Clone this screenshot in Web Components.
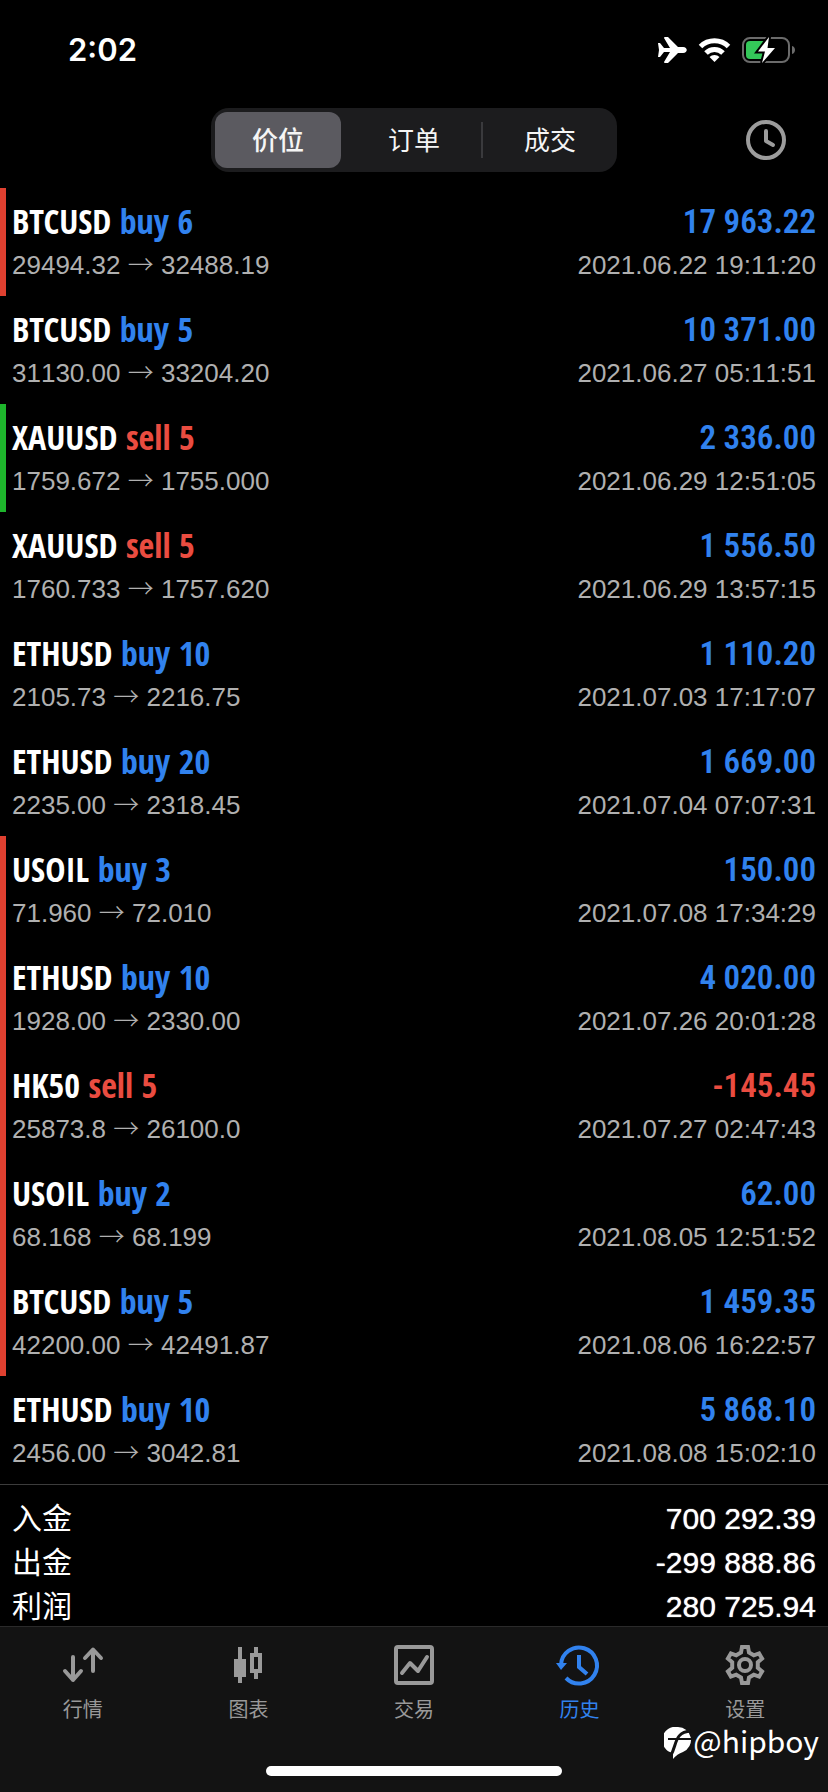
<!DOCTYPE html>
<html lang="zh-CN">
<head>
<meta charset="utf-8">
<meta name="viewport" content="width=device-width, initial-scale=1">
<title>历史</title>
<style>
  html { background: #000; }
  body {
    margin: 0;
    color: #fff;
    font-family: "Liberation Sans", "Noto Sans CJK SC", sans-serif;
    --blue: #3182ee;
    --red: #ea4c40;
    --grey: #b0b0b0;
    --icon: #999;
  }
</style>
</head>
<body>
<history-app></history-app>

<script>
const define = (name, html, setup) => {
  const template = document.createElement('template');
  template.innerHTML = html;
  customElements.define(name, class extends HTMLElement {
    constructor() {
      super();
      this.attachShadow({ mode: 'open' }).append(template.content.cloneNode(true));
    }
    connectedCallback() {
      if (setup) setup(this, this.shadowRoot);
    }
  });
};

define('status-bar', `
  <style>
    :host { display: flex; justify-content: space-between; align-items: center; height: 100px; padding: 0 32px 0 68px; }
    time { font: 600 31px/40px Inter, sans-serif; }
    .icons { display: flex; align-items: center; gap: 12px; }
    svg { display: block; overflow: visible; }
  </style>
  <time>2:02</time>
  <div class="icons">
    <svg width="29" height="26" viewBox="0 0 29 26" fill="#fff" role="img" aria-label="飞行模式">
      <path d="M0 6h2l4 5h6L6 1q0-1 1-1h3l10 10h5c5 0 5 6 0 6h-5L10 26H7q-1 0-1-1l6-10H6l-4 5H0l1-7z"/>
    </svg>
    <svg width="31" height="25" viewBox="0 0 31 25" fill="none" stroke="#fff" stroke-width="5" role="img" aria-label="Wi-Fi">
      <path d="M1.500 8.500A20 20 0 0 1 29.500 8.500M7 15A12 12 0 0 1 24 15"/>
      <path d="M15.500 24l-5-5a7 7 0 0 1 10 0z" fill="#fff" stroke="none"/>
    </svg>
    <svg width="54" height="26" viewBox="0 0 54 26" role="img" aria-label="正在充电">
      <rect x="1" y="1" width="46" height="24" rx="7" fill="none" stroke="#6b6b6b" stroke-width="2"/>
      <path d="M50 9c4 1 4 7 0 8z" fill="#6b6b6b"/>
      <rect x="4" y="4" width="20" height="18" rx="4" fill="#34c759"/>
      <path d="M27 0L16 14.500H23L20 26L33 11H25.500Z" fill="#fff" stroke="#000" stroke-width="4" paint-order="stroke"/>
    </svg>
  </div>
`);

define('segment-control', `
  <style>
    :host { display: grid; grid-template-columns: repeat(3, 126px); gap: 10px; padding: 4px; border-radius: 18px; background: #1c1c1e; }
    button { position: relative; height: 56px; padding: 0 0 2px; border: 0; border-radius: 12px; background: none; color: #f5f5f5; font: 400 26px/36px "Noto Sans CJK SC", sans-serif; }
    button[aria-pressed=true] { background: #5b5a60; font-weight: 500; }
    button:last-child::before { content: ""; position: absolute; left: -6px; top: 10px; width: 2px; height: 36px; background: #3a3a3d; }
  </style>
  <button type="button" aria-pressed="true">价位</button>
  <button type="button" aria-pressed="false">订单</button>
  <button type="button" aria-pressed="false">成交</button>
`);

define('top-bar', `
  <style>
    :host { display: grid; grid-template-columns: 1fr auto 1fr; align-items: center; height: 64px; padding: 8px 42px 16px; }
    .clock { grid-column: 3; justify-self: end; padding: 0; border: 0; background: none; }
    segment-control { grid-column: 2; }
    svg { display: block; }
  </style>
  <segment-control></segment-control>
  <button class="clock" type="button" aria-label="时间范围">
    <svg width="40" height="40" viewBox="-20 -20 40 40" fill="none" stroke="#9c9c9c" stroke-width="4">
      <circle r="18"/><path d="M0-9V1L7 5" stroke-linecap="round" stroke-linejoin="round"/>
    </svg>
  </button>
`);

define('deal-row', `
  <style>
    :host { display: grid; grid-template-columns: 1fr auto; grid-template-rows: 44px 32px; row-gap: 6px; align-items: center; padding: 11px 12px 15px 6px; border-left: 6px solid transparent; }
    :host([mark=red]) { border-color: #df4030; }
    :host([mark=green]) { border-color: #1eb52c; }
    .title { font: 700 34px/44px "Open Sans Condensed", "Roboto Condensed", sans-serif; }
    .side { color: var(--blue); }
    .side.sell, .amount.loss { color: var(--red); }
    .amount { padding-top: 2px; font: 600 33px/44px "Roboto Condensed", sans-serif; color: var(--blue); text-align: right; }
    .prices, time { font-size: 26px; line-height: 32px; font-kerning: none; color: var(--grey); }
    .arrow { font: 300 26px/26px "Noto Sans CJK SC", sans-serif; }
    time { text-align: right; }
  </style>
  <div class="title"><span class="symbol"></span> <span class="side"></span></div>
  <div class="amount"></div>
  <div class="prices"><span class="open"></span> <span class="arrow">→</span> <span class="close"></span></div>
  <time></time>
`, (el, root) => {
  const [symbol, side, size, open, close, amount, time] = el.getAttribute('deal').split('|');
  const set = (sel, text) => { root.querySelector(sel).textContent = text; };
  set('.symbol', symbol);
  set('.side', side + ' ' + size);
  set('.open', open);
  set('.close', close);
  set('.amount', amount);
  set('time', time);
  root.querySelector('.side').classList.add(side);
  if (amount.startsWith('-')) root.querySelector('.amount').classList.add('loss');
});

define('account-totals', `
  <style>
    :host { display: block; border-top: 1px solid #3c3c3c; }
    dl { margin: 0; padding: 9px 12px 0; }
    div { display: flex; justify-content: space-between; align-items: baseline; height: 44px; }
    dt { font: 400 30px/44px "Noto Sans CJK SC", sans-serif; }
    dd { margin: 0; font-size: 30px; line-height: 44px; text-shadow: 0 0 1px #fff; }
  </style>
  <dl>
    <div><dt>入金</dt><dd>700 292.39</dd></div>
    <div><dt>出金</dt><dd>-299 888.86</dd></div>
    <div><dt>利润</dt><dd>280 725.94</dd></div>
  </dl>
`);

define('tab-item', `
  <style>
    :host { display: block; }
    a { display: flex; flex-direction: column; align-items: center; gap: 12px; color: var(--icon); text-decoration: none; font: 400 20px/24px "Noto Sans CJK SC", sans-serif; }
    :host([active]) a { color: var(--blue); }
    ::slotted(svg) { display: block; width: 40px; height: 40px; overflow: visible; }
  </style>
  <a href="#"><slot name="icon"></slot><span><slot></slot></span></a>
`, (el, root) => {
  if (el.hasAttribute('active')) root.querySelector('a').setAttribute('aria-current', 'page');
});

define('tab-bar', `
  <style>
    :host { display: block; position: relative; flex: 1; min-height: 165px; border-top: 1px solid #2a2a2a; background: #131313; }
    nav { display: grid; grid-template-columns: repeat(5, 1fr); padding-top: 18px; }
    .mark { position: absolute; right: 9px; bottom: 32px; display: flex; align-items: center; gap: 1px; font: 400 30px/40px "Noto Sans CJK SC", sans-serif; }
    .mark svg { margin-top: 6px; }
    .home { position: absolute; left: 50%; bottom: 16px; width: 296px; height: 10px; margin-left: -148px; border-radius: 5px; background: #fff; }
  </style>
  <nav>
    <tab-item>
      <svg slot="icon" viewBox="0 0 40 40" fill="none" stroke="currentColor" stroke-width="4" stroke-linecap="round" stroke-linejoin="round"><path d="M10 12V35M2 26L10 35L18 26"/><path d="M30 26V5M22 13L30 4.500L38 13"/></svg>
      行情
    </tab-item>
    <tab-item>
      <svg slot="icon" viewBox="0 0 40 40" fill="currentColor" fill-rule="evenodd"><path d="M10 2h4v12h4v18h-4v6h-4v-6H6V14h4z"/><path d="M26 2h4v6h4v20h-4v6h-4v-6h-4V8h4zM26 12v12h4V12z"/></svg>
      图表
    </tab-item>
    <tab-item>
      <svg slot="icon" viewBox="0 0 40 40" fill="none" stroke="currentColor" stroke-width="4"><rect x="2" y="2" width="36" height="36" rx="2"/><path d="M8 28L16 18L24 26L33 12" stroke-linecap="round" stroke-linejoin="round"/></svg>
      交易
    </tab-item>
    <tab-item active>
      <svg slot="icon" viewBox="-19 -20 40 40" fill="none" stroke="currentColor" stroke-width="4"><path d="M-18 0A18 18 0 1 1-13 13M0-10V2L8 9"/><path d="M-23-2H-12L-18 5Z" fill="currentColor" stroke="none"/></svg>
      历史
    </tab-item>
    <tab-item>
      <svg slot="icon" viewBox="-20 -20 40 40" fill="none" stroke="currentColor" stroke-width="4"><path d="M-4-12.500L-3-18H3L4-12.500L8.800-9.700L14.100-11.600L17.100-6.400L12.800-2.800V2.800L17.100 6.400L14.100 11.600L8.800 9.700L4 12.500L3 18H-3L-4 12.500L-8.800 9.700L-14.100 11.600L-17.100 6.400L-12.800 2.800V-2.800L-17.100-6.400L-14.100-11.600L-8.800-9.700Z"/><circle r="6"/></svg>
      设置
    </tab-item>
  </nav>
  <div class="mark">
    <svg width="28" height="33" viewBox="0 0 28 33" aria-hidden="true"><path d="M14 0A13 13 0 0 1 19 25Q13 27 9 32V26A13 13 0 0 1 14 0z" fill="#fff"/><path d="M7 28C13 18 10 5 27 4" fill="none" stroke="#131313" stroke-width="3"/><path d="M4 12H28" fill="none" stroke="#131313" stroke-width="2"/></svg>
    <span>@hipboy</span>
  </div>
  <div class="home"></div>
`);

define('history-app', `
  <style>
    :host { display: flex; flex-direction: column; min-height: 100vh; background: #000; }
    main { display: block; }
  </style>
  <status-bar></status-bar>
  <top-bar></top-bar>
  <main></main>
  <account-totals></account-totals>
  <tab-bar></tab-bar>
`, (el, root) => {
  const deals = [
    ['BTCUSD|buy|6|29494.32|32488.19|17 963.22|2021.06.22 19:11:20', 'red'],
    ['BTCUSD|buy|5|31130.00|33204.20|10 371.00|2021.06.27 05:11:51'],
    ['XAUUSD|sell|5|1759.672|1755.000|2 336.00|2021.06.29 12:51:05', 'green'],
    ['XAUUSD|sell|5|1760.733|1757.620|1 556.50|2021.06.29 13:57:15'],
    ['ETHUSD|buy|10|2105.73|2216.75|1 110.20|2021.07.03 17:17:07'],
    ['ETHUSD|buy|20|2235.00|2318.45|1 669.00|2021.07.04 07:07:31'],
    ['USOIL|buy|3|71.960|72.010|150.00|2021.07.08 17:34:29', 'red'],
    ['ETHUSD|buy|10|1928.00|2330.00|4 020.00|2021.07.26 20:01:28', 'red'],
    ['HK50|sell|5|25873.8|26100.0|-145.45|2021.07.27 02:47:43', 'red'],
    ['USOIL|buy|2|68.168|68.199|62.00|2021.08.05 12:51:52', 'red'],
    ['BTCUSD|buy|5|42200.00|42491.87|1 459.35|2021.08.06 16:22:57', 'red'],
    ['ETHUSD|buy|10|2456.00|3042.81|5 868.10|2021.08.08 15:02:10']
  ];
  const main = root.querySelector('main');
  for (const [deal, mark] of deals) {
    const row = document.createElement('deal-row');
    row.setAttribute('deal', deal);
    if (mark) row.setAttribute('mark', mark);
    main.append(row);
  }
});
</script>
</body>
</html>
